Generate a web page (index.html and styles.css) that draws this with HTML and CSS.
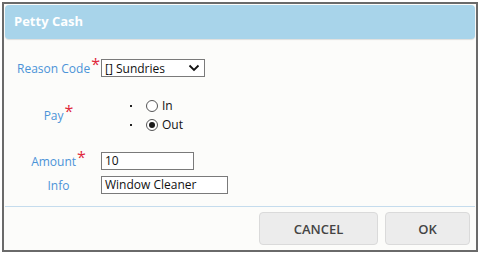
FILE: index.html
```html
<!DOCTYPE html>
<html lang="en">
<head>
  <meta charset="UTF-8">
  <title>Petty Cash</title>
  <link rel="stylesheet" href="styles.css">
</head>
<body>
  <div class="dialog">
    <div class="dialog-header">Petty Cash</div>

    <div class="dialog-form">
      <label class="field-label">Reason Code<span class="req">*</span></label>
      <div class="field">
        <div class="select-box">
          <span>[] Sundries</span>
          <svg class="chevron" width="12" height="8" viewBox="0 0 12 8">
            <path d="M1.5 1.5 L6 6 L10.5 1.5" fill="none" stroke="#111" stroke-width="1.8"/>
          </svg>
        </div>
      </div>

      <label class="field-label pay-label">Pay<span class="req">*</span></label>
      <div class="field">
        <ul class="radio-list">
          <li><span class="radio"></span>In</li>
          <li><span class="radio checked"></span>Out</li>
        </ul>
      </div>

      <label class="field-label amount-label">Amount<span class="req">*</span></label>
      <div class="field amount-field">
        <div class="text-box amount">10</div>
      </div>

      <label class="field-label info-label">Info</label>
      <div class="field info-field">
        <div class="text-box info">Window Cleaner</div>
      </div>
    </div>

    <div class="dialog-footer">
      <button class="btn cancel">CANCEL</button>
      <button class="btn ok">OK</button>
    </div>
  </div>
</body>
</html>
```

FILE: styles.css
```css
html, body {
  margin: 0;
  padding: 0;
  background: #ffffff;
}

body {
  font-family: "Open Sans", "Noto Sans", sans-serif;
  padding: 2px;
}

.dialog {
  box-sizing: border-box;
  width: 476px;
  height: 250px;
  border: 2px solid #6a6a6a;
  padding: 1px;
  background: #fcfcfa;
  display: flex;
  flex-direction: column;
}

.dialog-header {
  height: 34px;
  flex-shrink: 0;
  background: #a8d4ea;
  border-radius: 4px;
  box-shadow: 0 1px 1px rgba(0, 0, 0, 0.12);
  color: #ffffff;
  font-weight: 700;
  font-size: 13px;
  line-height: 33px;
  padding-left: 9px;
}

.dialog-form {
  display: grid;
  grid-template-columns: 85px 1fr;
  align-items: center;
  align-content: start;
  padding: 20px 0 0 11px;
  flex: 1;
}

.field-label {
  text-align: center;
  color: #4b93d8;
  font-size: 12px;
  white-space: nowrap;
}

.req {
  color: #e0283a;
  font-size: 16px;
  line-height: 0;
  position: relative;
  top: -3px;
  margin-left: 1px;
}

.select-box {
  box-sizing: border-box;
  width: 104px;
  height: 18px;
  border: 1px solid #7a7a7a;
  background: #ffffff;
  display: flex;
  align-items: center;
  justify-content: space-between;
  padding: 0 4px 0 3px;
  font-size: 12px;
  color: #111;
}

.pay-label {
  margin-top: 19px;
}

.radio-list {
  margin: 19px 0 0 0;
  padding: 0 0 0 45px;
  list-style: none;
  font-size: 12px;
  color: #111;
}

.radio-list li {
  height: 19px;
  display: flex;
  align-items: center;
  position: relative;
}

.radio-list li::before {
  content: "";
  position: absolute;
  left: -16px;
  top: 9px;
  width: 2px;
  height: 2px;
  background: #222;
}

.radio {
  box-sizing: border-box;
  width: 12px;
  height: 12px;
  border: 1px solid #555;
  border-radius: 50%;
  background: #fff;
  margin-right: 4px;
  display: flex;
  align-items: center;
  justify-content: center;
}

.radio.checked::after {
  content: "";
  width: 6px;
  height: 6px;
  border-radius: 50%;
  background: #1a1a1a;
}

.amount-label,
.amount-field {
  margin-top: 18px;
}

.info-label,
.info-field {
  margin-top: 6px;
}

.text-box {
  box-sizing: border-box;
  height: 18px;
  border: 1px solid #7a7a7a;
  background: #ffffff;
  font-size: 12px;
  line-height: 16px;
  padding-left: 3px;
  color: #111;
}

.text-box.amount {
  width: 93px;
}

.text-box.info {
  width: 127px;
}

.dialog-footer {
  border-top: 1px solid #c5dced;
  display: flex;
  justify-content: flex-end;
  gap: 7px;
  padding: 5px 5px 4px 0;
}

.btn {
  height: 33px;
  border: 1px solid #dadada;
  border-radius: 4px;
  background: #ececec;
  color: #444;
  font-family: "Open Sans", "Noto Sans", sans-serif;
  font-size: 13px;
  font-weight: 600;
  cursor: pointer;
}

.btn.cancel {
  width: 119px;
}

.btn.ok {
  width: 85px;
}
```
